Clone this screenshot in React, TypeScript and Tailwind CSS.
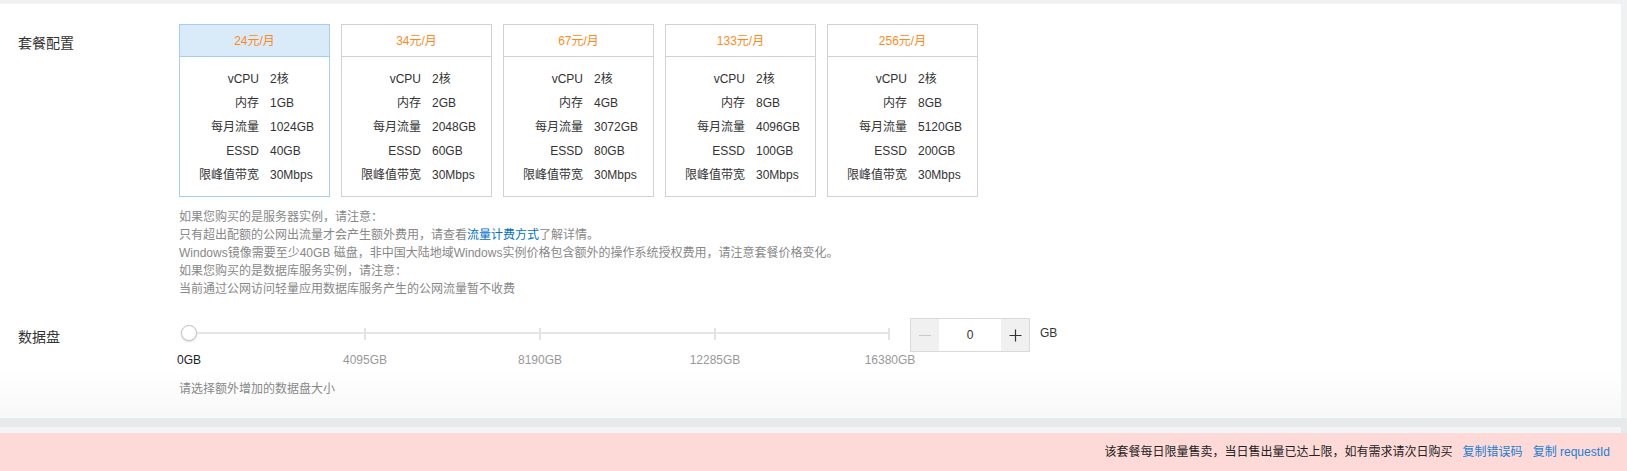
import React from "react";

const plans = [
  { price: "24元/月", mem: "1GB", flow: "1024GB", essd: "40GB", active: true },
  { price: "34元/月", mem: "2GB", flow: "2048GB", essd: "60GB" },
  { price: "67元/月", mem: "4GB", flow: "3072GB", essd: "80GB" },
  { price: "133元/月", mem: "8GB", flow: "4096GB", essd: "100GB" },
  { price: "256元/月", mem: "8GB", flow: "5120GB", essd: "200GB" },
];

const marks = ["0GB", "4095GB", "8190GB", "12285GB", "16380GB"];

function PlanCard({ plan }: { plan: (typeof plans)[number] }) {
  const rows = [
    ["vCPU", "2核"],
    ["内存", plan.mem],
    ["每月流量", plan.flow],
    ["ESSD", plan.essd],
    ["限峰值带宽", "30Mbps"],
  ];
  return (
    <div
      className={
        "w-[151px] border " +
        (plan.active ? "border-[#a9cdec]" : "border-[#d2d2d2]")
      }
    >
      <div
        className={
          "h-[32px] flex items-center justify-center border-b text-[12px] text-[#ff8a1c] " +
          (plan.active ? "bg-[#d9eaf8] border-[#a9cdec]" : "border-[#d2d2d2]")
        }
      >
        {plan.price}
      </div>
      <div className="pt-[10px] pb-[9px]">
        {rows.map(([k, v]) => (
          <div key={k} className="flex h-[24px] items-center text-[12px] text-[#333]">
            <span className="w-[79px] text-right">{k}</span>
            <span className="ml-[11px]">{v}</span>
          </div>
        ))}
      </div>
    </div>
  );
}

function DiskSlider() {
  return (
    <div className="relative w-[720px] h-[51px]">
      <div className="absolute left-[10px] top-[14px] w-[700px] h-[2px] bg-[#e6e6e6]" />
      {marks.map((m, i) => (
        <React.Fragment key={m}>
          {i > 0 && (
            <div
              className={
                "absolute top-[10px] w-[2px] h-[12px] bg-[#e3e3e3] " +
                ["", "left-[185px]", "left-[360px]", "left-[535px]", "left-[709px]"][i]
              }
            />
          )}
          <div
            className={
              "absolute top-[33px] w-[80px] -ml-[40px] text-center text-[12px] leading-[18px] " +
              (i === 0 ? "text-[#222]" : "text-[#999]") +
              " " +
              ["left-[10px]", "left-[186px]", "left-[361px]", "left-[536px]", "left-[711px]"][i]
            }
          >
            {m}
          </div>
        </React.Fragment>
      ))}
      <div className="absolute left-[2px] top-[7px] w-[16px] h-[16px] rounded-full bg-white border border-[#c4c4c8] shadow-[0_1px_2px_rgba(0,0,0,0.15)]" />
    </div>
  );
}

export default function App() {
  return (
    <div className="w-[1627px] h-[471px] bg-[#f0f1f3] pt-[4px] font-['Liberation_Sans','Noto_Sans_CJK_SC',sans-serif] overflow-hidden">
      <div className="mr-[6px] h-[414px] bg-gradient-to-b from-white from-[88%] to-[#f8f8f8] pt-[20px] pl-[18px] pb-[20px]">
        <div className="flex">
          <div className="w-[161px] pt-[9px] text-[14px] leading-[20px] text-[#333]">套餐配置</div>
          <div>
            <div className="flex gap-[11px]">
              {plans.map((p) => (
                <PlanCard key={p.price} plan={p} />
              ))}
            </div>
            <div className="mt-[11px] text-[12px] leading-[18px] text-[#888]">
              <p>如果您购买的是服务器实例，请注意：</p>
              <p>
                只有超出配额的公网出流量才会产生额外费用，请查看
                <span className="text-[#0070cc]">流量计费方式</span>
                了解详情。
              </p>
              <p>
                Windows镜像需要至少40GB 磁盘，非中国大陆地域Windows实例价格包含额外的操作系统授权费用，请注意套餐价格变化。
              </p>
              <p>如果您购买的是数据库服务实例，请注意：</p>
              <p>当前通过公网访问轻量应用数据库服务产生的公网流量暂不收费</p>
            </div>
          </div>
        </div>

        <div className="flex mt-[20px]">
          <div className="w-[161px] pt-[9px] text-[14px] leading-[20px] text-[#333]">数据盘</div>
          <div>
            <div className="flex items-start">
              <DiskSlider />
              <div className="ml-[11px] flex h-[34px] w-[120px] border border-[#d9d9d9]">
                <div className="w-[28px] bg-[#f0f0f0] flex items-center justify-center">
                  <div className="w-[12px] h-[1px] bg-[#c8c8c8]" />
                </div>
                <div className="flex-1 flex items-center justify-center text-[12px] text-[#333]">0</div>
                <div className="w-[28px] bg-[#f0f0f0] flex items-center justify-center">
                  <svg width="13" height="13" viewBox="0 0 13 13">
                    <path d="M6.5 0.5v12M0.5 6.5h12" stroke="#333" strokeWidth="1.2" />
                  </svg>
                </div>
              </div>
              <div className="ml-[10px] h-[30px] flex items-center text-[12px] text-[#333]">GB</div>
            </div>
            <div className="mt-[11px] text-[12px] leading-[18px] text-[#888]">请选择额外增加的数据盘大小</div>
          </div>
        </div>
      </div>
      <div className="h-[9px] bg-[#e8e9eb]" />
      <div className="h-[6px] bg-[#e8e9eb] flex">
        <div className="flex-1 mr-[6px] bg-[#f4f4f6]" />
      </div>
      <div className="h-[38px] bg-[#fddad7] flex items-center justify-end pr-[17px] text-[12px]">
        <span className="text-[#222]">该套餐每日限量售卖，当日售出量已达上限，如有需求请次日购买</span>
        <span className="ml-[10px] text-[#1a7fd6]">复制错误码</span>
        <span className="ml-[10px] text-[#1a7fd6]">复制 requestId</span>
      </div>
    </div>
  );
}
